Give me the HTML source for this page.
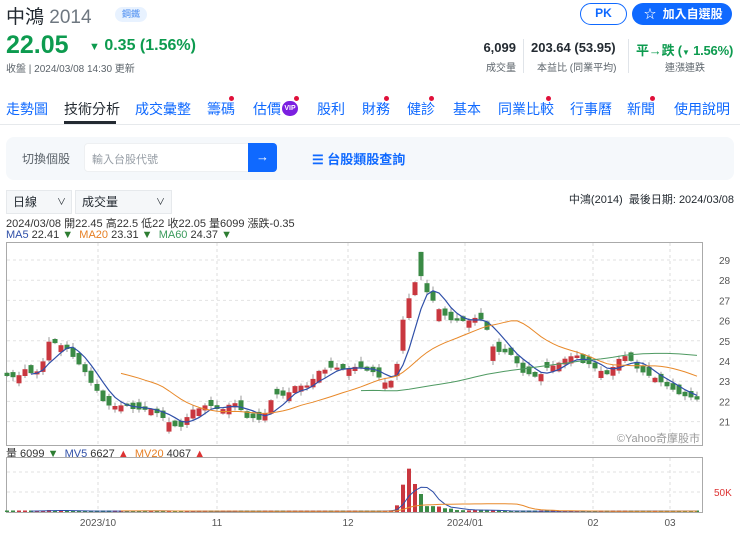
<!DOCTYPE html>
<html><head><meta charset="utf-8">
<style>
*{margin:0;padding:0;box-sizing:border-box}
body{width:740px;height:533px;background:#fff;font-family:"Liberation Sans","Noto Sans CJK TC",sans-serif;position:relative;overflow:hidden;color:#232a31}
.a{position:absolute;white-space:nowrap}
.nav span{position:absolute;top:99px;font-size:14px;color:#0f69ff}
.dot{position:absolute;width:5px;height:5px;border-radius:50%;background:#e0103a}
.g{color:#0d9b4f}
</style></head><body>
<div class="a" style="left:6px;top:2px;font-size:19px;color:#232a31">中鴻 <span style="color:#6e7780">2014</span></div>
<div class="a" style="left:115px;top:7px;width:32px;height:15px;border-radius:8px;background:#e8f2ff;color:#4a8cf0;font-size:9px;text-align:center;line-height:15px">鋼鐵</div>
<div class="a g" style="left:6px;top:31px;font-size:25px;font-weight:bold">22.05</div>
<div class="a g" style="left:89px;top:37px;font-size:16px;font-weight:bold"><span style="font-size:11px">▼</span> 0.35 (1.56%)</div>
<div class="a" style="left:6px;top:60px;font-size:10px;color:#5b636a">收盤 | 2024/03/08 14:30 更新</div>

<div class="a" style="left:580px;top:3px;width:47px;height:22px;border:1.5px solid #0f69ff;border-radius:11px;color:#0f69ff;font-size:12px;font-weight:bold;text-align:center;line-height:19px">PK</div>
<div class="a" style="left:632px;top:3px;width:100px;height:22px;background:#0f69ff;border-radius:11px;color:#fff;font-size:12px;font-weight:bold;line-height:22px;padding-left:12px">☆&nbsp; 加入自選股</div>

<div class="a" style="left:466px;top:40px;width:50px;text-align:right;font-size:13px;font-weight:bold">6,099</div>
<div class="a" style="left:466px;top:59px;width:50px;text-align:right;font-size:10px;color:#5b636a">成交量</div>
<div class="a" style="left:523px;top:39px;width:1px;height:34px;background:#e0e4e9"></div>
<div class="a" style="left:531px;top:40px;font-size:13px;font-weight:bold">203.64 (53.95)</div>
<div class="a" style="left:537px;top:59px;font-size:10px;color:#5b636a">本益比 (同業平均)</div>
<div class="a" style="left:628px;top:39px;width:1px;height:34px;background:#e0e4e9"></div>
<div class="a g" style="left:636px;top:40px;font-size:13px;font-weight:bold;letter-spacing:-0.2px">平→跌 (<span style="font-size:8px">▼</span> 1.56%)</div>
<div class="a" style="left:665px;top:59px;font-size:10px;color:#5b636a">連漲連跌</div>

<div class="nav">
<span style="left:6px">走勢圖</span>
<span style="left:64px;color:#232a31">技術分析</span>
<span style="left:135px">成交彙整</span>
<span style="left:207px">籌碼</span>
<span style="left:253px">估價</span>
<span style="left:317px">股利</span>
<span style="left:362px">財務</span>
<span style="left:407px">健診</span>
<span style="left:453px">基本</span>
<span style="left:498px">同業比較</span>
<span style="left:570px">行事曆</span>
<span style="left:627px">新聞</span>
<span style="left:674px">使用說明</span>
</div>
<div class="a" style="left:282px;top:101px;width:16px;height:15px;border-radius:8px;background:#7b1fe0;color:#fff;font-size:7px;font-weight:bold;text-align:center;line-height:15px">VIP</div>
<div class="dot" style="left:229px;top:96px"></div><div class="dot" style="left:294px;top:96px"></div>
<div class="dot" style="left:384px;top:96px"></div><div class="dot" style="left:429px;top:96px"></div>
<div class="dot" style="left:546px;top:96px"></div><div class="dot" style="left:650px;top:96px"></div>
<div class="a" style="left:64px;top:121px;width:52px;height:3px;background:#232a31"></div>
<div class="a" style="left:0;top:124px;width:740px;height:1px;background:#e6e9ec"></div>

<div class="a" style="left:6px;top:137px;width:728px;height:43px;background:#f5f8fb;border-radius:8px"></div>
<div class="a" style="left:22px;top:150px;font-size:12px;color:#5b636a">切換個股</div>
<div class="a" style="left:84px;top:143px;width:165px;height:29px;background:#fff;border-radius:4px 0 0 4px;border:1px solid #eef0f2"></div>
<div class="a" style="left:92px;top:151px;font-size:11px;color:#979ea6">輸入台股代號</div>
<div class="a" style="left:248px;top:143px;width:29px;height:29px;background:#0f69ff;border-radius:0 4px 4px 0;color:#fff;text-align:center;line-height:28px;font-size:13px">→</div>
<div class="a" style="left:312px;top:149px;font-size:13px;font-weight:bold;color:#0f69ff">☰ 台股類股查詢</div>

<div class="a" style="left:6px;top:190px;width:66px;height:24px;background:#f5f7f9;border:1px solid #e6e9ec;font-size:12px;line-height:22px;padding-left:6px">日線<span style="position:absolute;left:50px;font-size:9px">∨</span></div>
<div class="a" style="left:75px;top:190px;width:97px;height:24px;background:#f5f7f9;border:1px solid #e6e9ec;font-size:12px;line-height:22px;padding-left:6px">成交量<span style="position:absolute;left:80px;font-size:9px">∨</span></div>
<div class="a" style="right:6px;top:191px;font-size:11px;color:#232a31">中鴻(2014) &nbsp;最後日期: 2024/03/08</div>
<div class="a" style="left:6px;top:215px;font-size:11px;color:#333">2024/03/08 開22.45 高22.5 低22 收22.05 量6099 漲跌-0.35</div>
<div class="a" style="left:6px;top:229px;font-size:11px;color:#333"><span style="color:#2f4fa8">MA5</span> 22.41 <span style="color:#2e7d32">▼</span> &nbsp;<span style="color:#e67e22">MA20</span> 23.31 <span style="color:#2e7d32">▼</span> &nbsp;<span style="color:#3a9a5b">MA60</span> 24.37 <span style="color:#2e7d32">▼</span></div>
<div class="a" style="left:6px;top:445px;font-size:11px;color:#333">量 6099 <span style="color:#2e7d32">▼</span> &nbsp;<span style="color:#2f4fa8">MV5</span> 6627 <span style="color:#d33">▲</span> &nbsp;<span style="color:#e67e22">MV20</span> 4067 <span style="color:#d33">▲</span></div>

<svg id="c" class="a" style="left:0;top:0" width="740" height="533"></svg>
<script>
(function(){
var s='',NS=document.getElementById('c');
function L(x1,y1,x2,y2,c,w,d){s+='<line x1="'+x1+'" y1="'+y1+'" x2="'+x2+'" y2="'+y2+'" stroke="'+c+'" stroke-width="'+(w||1)+'"'+(d?' stroke-dasharray="3,3"':'')+'/>';}
s+='<rect x="6.5" y="242.5" width="696" height="203" fill="none" stroke="#aaa"/>';
s+='<rect x="6.5" y="457.5" width="696" height="55" fill="none" stroke="#aaa"/>';
var gx=[98,217,348,465,593,670];
gx.forEach(function(x){L(x,243,x,445,'#ddd',1,1);L(x,458,x,512,'#ddd',1,1);});
function Y(p){return 260+(29-p)*20.2;}
for(var p=21;p<=29;p++){L(7,Y(p),702,Y(p),'#e2e2e2',1,1);s+='<text x="719" y="'+(Y(p)+4)+'" font-size="10" fill="#555" font-family="Liberation Sans">'+p+'</text>';}
L(7,472,702,472,'#e2e2e2',1,1);L(7,492,702,492,'#e2e2e2',1,1);
s+='<text x="714" y="496" font-size="10" fill="#d33" font-family="Liberation Sans">50K</text>';
[['2023/10',98],['11',217],['12',348],['2024/01',465],['02',593],['03',670]].forEach(function(t){s+='<text x="'+t[1]+'" y="526" text-anchor="middle" font-size="10" fill="#555" font-family="Liberation Sans">'+t[0]+'</text>';});
s+='<text x="700" y="442" text-anchor="end" font-size="11" fill="#999" font-family="Liberation Sans,Noto Sans CJK TC">©Yahoo奇摩股市</text>';
var K=[[7,23.3],[14,23.2],[20,23.3],[26,23.6],[32,23.4],[38,23.5],[43,23.95],[49,25.0],[55,24.9],[60,24.8],[66,24.6],[72,24.3],[78,23.9],[84,23.5],[89,23.1],[95,22.7],[100,22.3],[106,21.7],[112,21.8],[118,21.8],[124,21.8],[130,21.7],[140,21.6],[148,21.55],[154,21.6],[160,21.3],[170,20.9],[176,20.8],[182,20.75],[188,21.3],[194,21.6],[200,21.7],[205,21.8],[215,21.7],[222,21.6],[228,21.8],[234,21.9],[240,21.7],[245,21.2],[252,21.15],[258,21.1],[264,21.3],[270,22.0],[277,22.3],[282,22.3],[288,22.4],[294,22.7],[300,22.85],[305,22.7],[315,23.2],[321,23.6],[327,23.6],[333,23.7],[340,23.6],[348,23.65],[356,23.7],[364,23.6],[373,23.45],[382,23.0],[390,22.95],[396,23.45],[402,25.8],[408,27.0],[414,27.8],[418,28.2],[424,27.7],[430,27.2],[436,26.8],[442,26.3],[448,26.1],[454,26.0],[460,26.0],[466,25.9],[472,26.2],[478,26.1],[484,26.0],[490,25.0],[496,24.5],[502,24.4],[508,24.4],[514,24.3],[520,23.5],[526,23.3],[532,23.3],[538,23.2],[546,23.6],[552,23.8],[558,23.9],[565,24.1],[572,24.2],[577,24.3],[583,23.9],[590,23.8],[596,23.65],[602,23.5],[608,23.3],[615,23.8],[621,24.3],[628,24.2],[634,23.75],[640,23.6],[646,23.3],[652,23.2],[658,23.05],[664,22.9],[670,22.6],[676,22.5],[682,22.3],[688,22.25],[697,22.05]];
function interp(A,x){for(var i=0;i<A.length-1;i++){if(x<=A[i+1][0]){var t=(x-A[i][0])/(A[i+1][0]-A[i][0]);return A[i][1]+t*(A[i+1][1]-A[i][1]);}}return A[A.length-1][1];}
var V=[[7,2],[40,3],[48,5],[60,3],[100,2],[150,3],[200,1.5],[300,2],[380,2],[395,5],[401,40],[407,125],[413,75],[419,60],[425,15],[431,14],[437,16],[443,9],[449,10],[455,5],[470,4],[480,6],[490,3],[520,2],[600,2],[697,2.5]];
var C=[],Vo=[],X=[];
for(var i=0;i<116;i++){var x=7+i*6;X.push(x);C.push(interp(K,x)+((i*37)%7-3)*0.015);Vo.push(interp(V,x));}
var RED='#c9373f',GR='#3a8a45';
for(var i=0;i<116;i++){var c=C[i],pc=i?C[i-1]:c-0.1,up=c>=pc;if((i*11)%9==0)up=!up;
var d=0.1+((i*7)%5)*0.06+Math.abs(c-pc)*0.6;
var o=up?c-d:c+d;if(i==69){o=29.4;c=28.2;}
var col=c>=o?RED:GR,hi=Math.max(o,c)+0.05+((i*13)%4)*0.06,lo=Math.min(o,c)-0.05-((i*7)%4)*0.05;
if(i==69)hi=29.4;
L(X[i],Y(hi),X[i],Y(lo),'#999',1);
var ty=Y(Math.max(o,c)),bh=Math.max(2,Y(Math.min(o,c))-ty);
s+='<rect x="'+(X[i]-2.5)+'" y="'+ty.toFixed(1)+'" width="5" height="'+bh.toFixed(1)+'" fill="'+col+'"/>';
var vh=Math.max(1.5,Vo[i]*0.4);
s+='<rect x="'+(X[i]-2)+'" y="'+(512-vh)+'" width="4" height="'+vh+'" fill="'+col+'"/>';}
function ma(A,n,f,col,w){var pts=[];for(var i=n-1;i<A.length;i++){var t=0;for(var j=i-n+1;j<=i;j++)t+=A[j];pts.push(X[i]+','+f(t/n).toFixed(1));}
s+='<polyline points="'+pts.join(' ')+'" fill="none" stroke="'+col+'" stroke-width="'+(w||1)+'"/>';}
ma(C,5,Y,'#2f4fa8',1.2);ma(C,20,Y,'#e8892a',1);ma(C,60,Y,'#4f9a62',1);
var VY=function(v){return 512-v*0.4;};
ma(Vo,5,VY,'#2f4fa8',1);ma(Vo,20,VY,'#e8892a',1);
NS.innerHTML=s;
})();
</script>
</body></html>
